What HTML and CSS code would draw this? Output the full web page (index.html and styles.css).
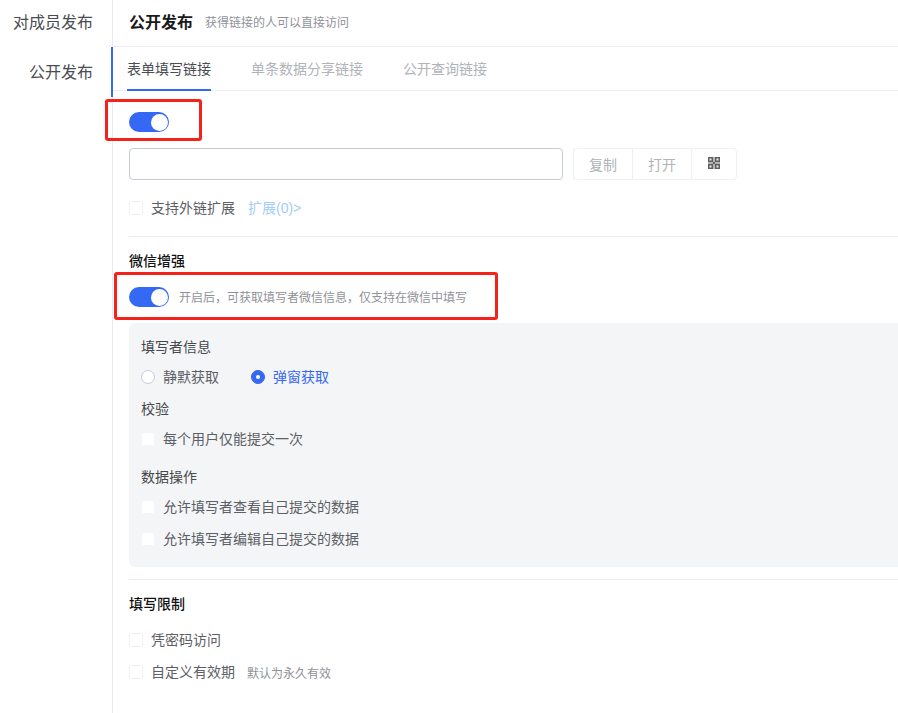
FILE: index.html
```html
<!DOCTYPE html>
<html lang="zh">
<head>
<meta charset="utf-8">
<title>公开发布</title>
<link rel="stylesheet" href="styles.css">
</head>
<body>
<div class="page">
  <nav class="side">
    <div class="side-item">对成员发布</div>
    <div class="side-item active">公开发布</div>
  </nav>
  <main class="main">
    <header class="head">
      <span class="head-title">公开发布</span>
      <span class="head-sub">获得链接的人可以直接访问</span>
    </header>
    <div class="tabs">
      <div class="tab on">表单填写链接</div>
      <div class="tab">单条数据分享链接</div>
      <div class="tab">公开查询链接</div>
    </div>
    <div class="body">
      <div class="toggle-row first"><span class="switch"></span></div>
      <div class="link-row">
        <div class="input"></div>
        <div class="btns">
          <span class="btn">复制</span>
          <span class="btn">打开</span>
          <span class="btn">
            <svg class="qr" width="12" height="12" viewBox="0 0 12 12"><path fill="#b4b4b4" d="M0 0h12v12H0z"/><path fill="#5f5f5f" d="M0 0h5v5H0zM7 0h5v5H7zM0 7h5v5H0zM7 7h5v5H7zM5 5h2v2H5z"/><path fill="#eee" d="M1.500 1.500h2v2h-2zM8.500 1.500h2v2h-2zM1.500 8.500h2v2h-2zM8.500 8.500h2v2h-2z"/></svg>
          </span>
        </div>
      </div>
      <div class="check-row ext"><span class="box"></span><span class="label">支持外链扩展</span><span class="link">扩展(0)&gt;</span></div>
      <div class="divider d1"></div>
      <div class="sec-title wx">微信增强</div>
      <div class="toggle-row wx-toggle"><span class="switch"></span><span class="hint">开启后，可获取填写者微信信息，仅支持在微信中填写</span></div>
      <section class="panel">
        <div class="p-title t1">填写者信息</div>
        <div class="radios">
          <span class="radio-item"><span class="radio"></span><span class="label">静默获取</span></span>
          <span class="radio-item sel"><span class="radio"></span><span class="label">弹窗获取</span></span>
        </div>
        <div class="p-title t2">校验</div>
        <div class="check-row p"><span class="box w"></span><span class="label">每个用户仅能提交一次</span></div>
        <div class="p-title t3">数据操作</div>
        <div class="check-row p r1"><span class="box w"></span><span class="label">允许填写者查看自己提交的数据</span></div>
        <div class="check-row p r2"><span class="box w"></span><span class="label">允许填写者编辑自己提交的数据</span></div>
      </section>
      <div class="divider d2"></div>
      <div class="sec-title lim">填写限制</div>
      <div class="check-row l1"><span class="box"></span><span class="label">凭密码访问</span></div>
      <div class="check-row l2"><span class="box"></span><span class="label">自定义有效期</span><span class="note">默认为永久有效</span></div>
    </div>
  </main>
</div>
<div class="mark m1"></div>
<div class="mark m2"></div>
</body>
</html>
```
FILE: styles.css
```css
* { box-sizing: border-box; }
html, body { margin: 0; padding: 0; background: #fff; }
body {
  width: 898px;
  height: 713px;
  overflow: hidden;
  position: relative;
  font-family: "Liberation Sans", "Noto Sans CJK SC", sans-serif;
  color: #5c6066;
  font-size: 14px;
}
.page { display: flex; height: 713px; }
.side { width: 113px; flex: none; border-right: 1px solid #e8eaed; padding-top: 0; }
.side-item {
  height: 47px;
  line-height: 46px;
  font-size: 16px;
  text-align: right;
  padding-right: 19px;
  color: #4a4d52;
}
.side-item.active {
  height: 50px;
  line-height: 52px;
  margin-right: -1px;
  padding-right: 18px;
  border-right: 2px solid #3468f5;
}
.main { flex: 1; min-width: 0; }
.head {
  height: 47px;
  padding: 0 0 4px 16px;
  display: flex;
  align-items: center;
  border-bottom: 1px solid #eceef1;
}
.head-title { font-size: 16px; font-weight: 700; color: #1a1a1a; }
.head-sub { font-size: 12px; color: #8f9298; margin-left: 12px; }
.tabs {
  height: 44px;
  display: flex;
  padding-left: 14px;
  border-bottom: 1px solid #eceef1;
}
.tab {
  height: 44px;
  line-height: 45px;
  margin-right: 40px;
  color: #b0b3b8;
}
.tab.on { color: #4a4d52; border-bottom: 2px solid #3468f5; }
.body { padding-left: 16px; }
.switch {
  display: inline-block;
  flex: none;
  width: 40px;
  height: 20px;
  border-radius: 10px;
  background: #3468f5;
  position: relative;
}
.switch::after {
  content: "";
  position: absolute;
  right: 1.500px;
  top: 1.500px;
  width: 17px;
  height: 17px;
  border-radius: 50%;
  background: #fff;
}
.toggle-row { display: flex; align-items: center; height: 20px; }
.toggle-row.first { margin-top: 21px; }
.link-row { display: flex; margin-top: 16px; }
.input {
  width: 434px;
  height: 32px;
  border: 1px solid #c5cbd9;
  border-radius: 4px;
}
.btns {
  margin-left: 10px;
  display: flex;
  height: 32px;
  border: 1px solid #eff0f2;
  border-radius: 4px;
}
.btn {
  width: 59px;
  display: flex;
  align-items: center;
  justify-content: center;
  color: #b0b3b8;
  border-left: 1px solid #eff0f2;
}
.btn:first-child { border-left: 0; width: 58px; }
.btn:last-child { width: 45px; }
.qr { display: block; margin-top: -2px; }
.check-row { display: flex; align-items: center; height: 20px; }
.box {
  flex: none;
  width: 14px;
  height: 14px;
  border: 1px solid #eff0f2;
  border-radius: 2px;
  background: #fff;
  margin-right: 8px;
}
.box.w { border-color: #f4f5f7; }
.label { color: #5c6066; margin-bottom: 2px; }
.check-row.ext { margin-top: 18px; }
.link { color: #a3cdf8; margin: 0 0 2px 13px; }
.divider { height: 1px; background: #e9ebee; }
.d1 { margin-top: 18px; }
.sec-title { font-weight: 500; color: #111; height: 20px; line-height: 20px; }
.wx { margin-top: 14px; }
.wx-toggle { margin-top: 16px; }
.hint { font-size: 12px; color: #8f9298; margin: 0 0 2px 10px; }
.panel {
  margin-top: 16px;
  height: 244px;
  padding: 14px 12px 0;
  background: #f4f5f7;
  border-radius: 6px 0 0 6px;
}
.p-title { height: 20px; line-height: 20px; color: #45484d; font-weight: 400; }
.radios { display: flex; height: 20px; margin-top: 10px; }
.radio-item { display: flex; align-items: center; margin-right: 32px; }
.radio {
  width: 14px;
  height: 14px;
  border: 1px solid #c5cbd9;
  border-radius: 50%;
  background: #fff;
  margin-right: 8px;
  position: relative;
}
.sel .radio { background: #3468f5; border-color: #3468f5; }
.sel .radio::after {
  content: "";
  position: absolute;
  left: 4px;
  top: 4px;
  width: 4px;
  height: 4px;
  border-radius: 50%;
  background: #fff;
}
.sel .label { color: #3468f5; }
.t2 { margin-top: 12px; }
.check-row.p { margin-top: 10px; }
.t3 { margin-top: 18px; }
.check-row.p.r1 { margin-top: 10px; }
.check-row.p.r2 { margin-top: 12px; }
.d2 { margin-top: 12px; }
.lim { margin-top: 14px; }
.l1 { margin-top: 16px; }
.l2 { margin-top: 12px; }
.note { font-size: 12px; color: #8f9298; margin-left: 12px; }
.mark {
  position: absolute;
  border: 3px solid #f5221a;
  border-radius: 3px;
}
.m1 { left: 105px; top: 99px; width: 97px; height: 42px; }
.m2 { left: 114px; top: 272px; width: 384px; height: 48px; }
```
